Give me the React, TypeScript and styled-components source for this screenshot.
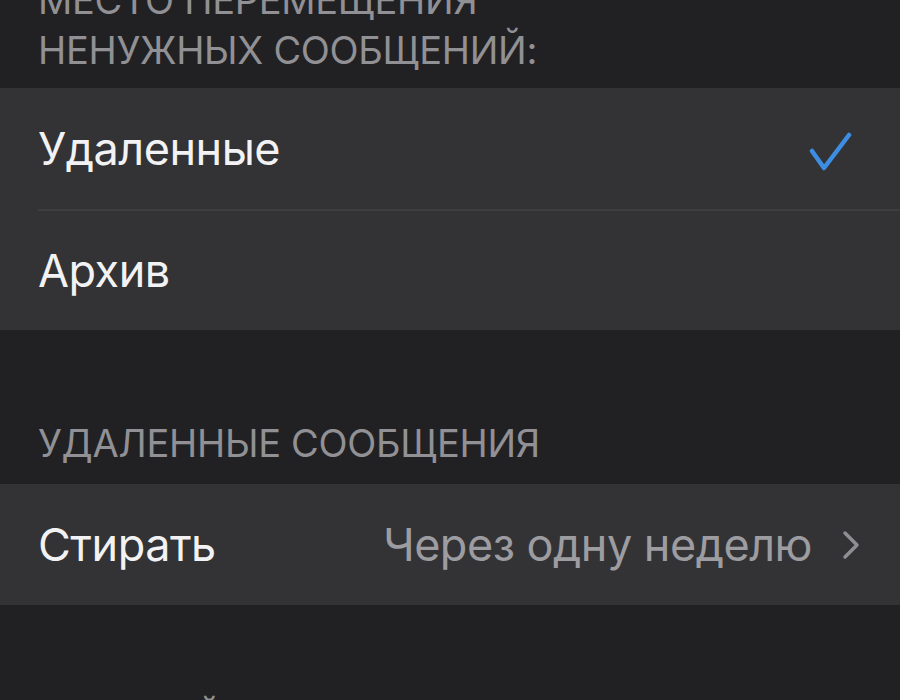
import React from 'react';
import styled, { createGlobalStyle } from 'styled-components';

const GlobalStyle = createGlobalStyle`
  html, body {
    margin: 0;
    padding: 0;
    background: #212123;
  }
  body {
    font-family: 'Inter', 'Noto Sans', sans-serif;
    -webkit-font-smoothing: antialiased;
  }
`;

type Option = {
  label: string;
  selected?: boolean;
};

const destinations: Option[] = [
  { label: 'Удаленные', selected: true },
  { label: 'Архив' },
];

const CheckIcon = () => (
  <CheckMark width="44" height="40" viewBox="0 0 44 40" fill="none">
    <path
      d="M4 19 L16 36 L41 3"
      stroke="#3d8ee2"
      strokeWidth="4.5"
      strokeLinecap="round"
      strokeLinejoin="round"
    />
  </CheckMark>
);

const ChevronIcon = () => (
  <svg width="18" height="30" viewBox="0 0 18 30" fill="none">
    <path
      d="M3 3 L15 15 L3 27"
      stroke="#8e8e93"
      strokeWidth="3.5"
      strokeLinecap="round"
      strokeLinejoin="round"
    />
  </svg>
);

const App: React.FC = () => (
  <>
    <GlobalStyle />
    <Screen>
      <Content>
        <SectionHeader>
          Место перемещения
          <br />
          ненужных сообщений:
        </SectionHeader>
        <Group>
          {destinations.map(({ label, selected }, index) => (
            <Cell key={label} divided={index > 0}>
              <CellLabel>{label}</CellLabel>
              {selected && <CheckIcon />}
            </Cell>
          ))}
        </Group>

        <SectionHeader spaced>Удаленные сообщения</SectionHeader>
        <Group>
          <Cell>
            <CellLabel>Стирать</CellLabel>
            <Accessory>
              <CellValue>Через одну неделю</CellValue>
              <ChevronIcon />
            </Accessory>
          </Cell>
        </Group>

        <SectionHeader spaced>Настройки входящих</SectionHeader>
      </Content>
    </Screen>
  </>
);

const Screen = styled.div`
  width: 900px;
  height: 700px;
  overflow: hidden;
  background: #212123;
`;

const Content = styled.div`
  display: flex;
  flex-direction: column;
  margin-top: -25px;
`;

const SectionHeader = styled.div<{ spaced?: boolean }>`
  padding: ${({ spaced }) => (spaced ? '88px 38px 16px' : '0 38px 13px')};
  font-size: 38px;
  line-height: 50px;
  text-transform: uppercase;
  color: #909095;
  letter-spacing: -0.3px;
`;

const Group = styled.div`
  display: flex;
  flex-direction: column;
  background: #333335;
`;

const Cell = styled.div<{ divided?: boolean }>`
  display: flex;
  align-items: center;
  justify-content: space-between;
  height: 121px;
  margin-left: 38px;
  padding-right: 40px;
  box-sizing: border-box;
  border-top: ${({ divided }) => (divided ? '2px solid #3e3e41' : 'none')};
`;

const CheckMark = styled.svg`
  margin-right: 8px;
  margin-top: 6px;
`;

const CellLabel = styled.span`
  font-size: 45px;
  color: #f2f2f4;
  letter-spacing: -0.5px;
`;

const Accessory = styled.div`
  display: flex;
  align-items: center;
  gap: 30px;
`;

const CellValue = styled.span`
  font-size: 45px;
  color: #9c9ca1;
  letter-spacing: -0.5px;
`;

export default App;
